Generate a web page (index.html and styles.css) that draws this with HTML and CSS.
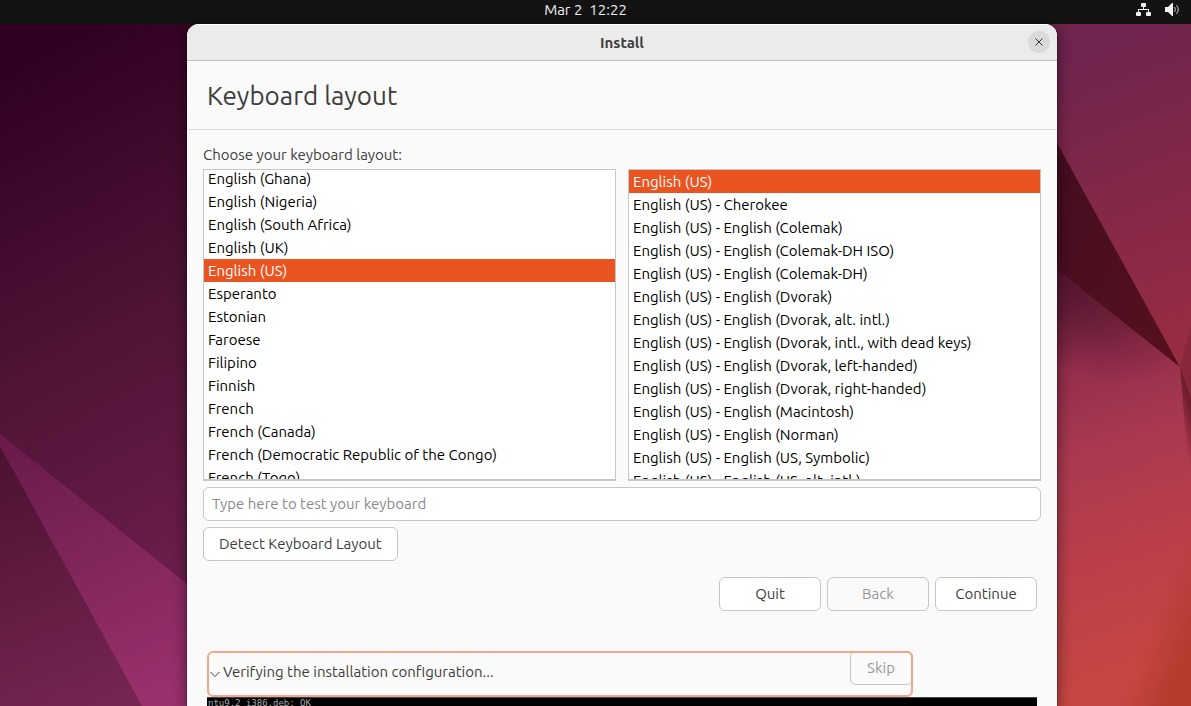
FILE: index.html
```html
<!DOCTYPE html>
<html lang="en">
<head>
<meta charset="utf-8">
<meta name="viewport" content="width=device-width, initial-scale=1">
<title>Install</title>
<link rel="stylesheet" href="styles.css">
</head>
<body>
<svg class="wallpaper" viewBox="0 0 1191 706" preserveAspectRatio="none" aria-hidden="true">
  <defs>
    <linearGradient id="dusk" gradientUnits="userSpaceOnUse" x1="20" y1="60" x2="290" y2="560"><stop offset="0" stop-color="#310021"/><stop offset=".5" stop-color="#4f1436"/><stop offset="1" stop-color="#701f4c"/></linearGradient>
    <linearGradient id="petal" gradientUnits="userSpaceOnUse" x1="30" y1="450" x2="150" y2="706"><stop offset="0" stop-color="#6c1c4c"/><stop offset="1" stop-color="#9a316c"/></linearGradient>
    <linearGradient id="corner" gradientUnits="userSpaceOnUse" x1="0" y1="460" x2="100" y2="706"><stop offset="0" stop-color="#4d1232"/><stop offset="1" stop-color="#752550"/></linearGradient>
    <linearGradient id="plum" gradientUnits="userSpaceOnUse" x1="1080" y1="50" x2="1200" y2="360"><stop offset="0" stop-color="#70244e"/><stop offset=".3" stop-color="#7c264a"/><stop offset="1" stop-color="#9a2d41"/></linearGradient>
    <linearGradient id="fold" x1="0" y1="0" x2="1" y2="1"><stop offset="0" stop-color="#3c0d24"/><stop offset="1" stop-color="#56101c"/></linearGradient>
    <linearGradient id="ember" gradientUnits="userSpaceOnUse" x1="1080" y1="300" x2="1190" y2="660"><stop offset="0" stop-color="#7a2440"/><stop offset=".15" stop-color="#922d4b"/><stop offset=".4" stop-color="#ab3950"/><stop offset=".65" stop-color="#b93e4b"/><stop offset="1" stop-color="#c64742"/></linearGradient>
    <radialGradient id="shade" gradientTransform="translate(1050 264) rotate(38) scale(160 85)" gradientUnits="userSpaceOnUse" cx="0" cy="0" r="1"><stop offset="0" stop-color="#46102a" stop-opacity=".8"/><stop offset="1" stop-color="#46102a" stop-opacity="0"/></radialGradient>
    <linearGradient id="rim" gradientUnits="userSpaceOnUse" x1="1160" y1="600" x2="1200" y2="616"><stop offset="0" stop-color="#b0392a" stop-opacity="0"/><stop offset="1" stop-color="#b0392a" stop-opacity=".8"/></linearGradient>
    <linearGradient id="crease" gradientUnits="userSpaceOnUse" x1="1194" y1="420" x2="1179" y2="424"><stop offset="0" stop-color="#6e1d2a"/><stop offset="1" stop-color="#6e1d2a" stop-opacity="0"/></linearGradient>
  </defs>
  <rect width="1191" height="706" fill="url(#dusk)"/>
  <path d="M0 434 187 584 260 642V706H0z" fill="url(#petal)"/>
  <path d="M0 446 142 706H0z" fill="url(#corner)"/>
  <path d="M900 0H1191V706H900z" fill="url(#plum)"/>
  <path d="M1000 225 1180 367 1191 398V706H1000z" fill="url(#ember)"/>
  <path d="M1000 225 1180 367V500H1000z" fill="url(#shade)"/>
  <path d="M1191 450V706H1100z" fill="url(#rim)"/>
  <path d="M1180 367 1191 396V500z" fill="url(#crease)"/>
  <path d="M1180 367 1191 325V398z" fill="#862839"/>
  <path d="M1000 39 1057 143 1180 367 1057 270 1000 225z" fill="url(#fold)"/>
</svg>
<div class="screen">
  <header class="topbar">
    <time class="clock" datetime="03-02T12:22">Mar 2&nbsp; 12:22</time>
    <div class="tray">
      <svg class="tray-icon" viewBox="0 0 16 16" role="img" aria-label="Wired network"><rect x="5" y="1" width="5" height="4" rx="1"/><rect x="0" y="10" width="5" height="4" rx="1"/><rect x="10" y="10" width="5" height="4" rx="1"/><path d="M7 5h1v2h5v3h-1V8H3v2H2V7h5z"/></svg>
      <svg class="tray-icon" viewBox="0 0 16 16" role="img" aria-label="Volume"><path d="M1 5h3l4-4h1v13H8l-4-4H1z"/><path class="wave" d="M10.500 5q2 2.500 0 5M12.500 3.200q3.500 4.300 0 8.600"/></svg>
    </div>
  </header>
  <main class="window">
    <header class="titlebar">
      <h1 class="window-title">Install</h1>
      <button class="close" type="button" aria-label="Close"><svg viewBox="0 0 10 10" aria-hidden="true"><path d="M1.500 1.500l7 7M8.500 1.500l-7 7"/></svg></button>
    </header>
    <h2 class="page-title">Keyboard layout</h2>
    <form class="content">
      <label class="prompt" for="layout">Choose your keyboard layout:</label>
      <div class="lists">
        <div class="list">
          <select class="options scrolled" id="layout" size="14">
            <option>English (Ghana)</option>
            <option>English (Nigeria)</option>
            <option>English (South Africa)</option>
            <option>English (UK)</option>
            <option selected>English (US)</option>
            <option>Esperanto</option>
            <option>Estonian</option>
            <option>Faroese</option>
            <option>Filipino</option>
            <option>Finnish</option>
            <option>French</option>
            <option>French (Canada)</option>
            <option>French (Democratic Republic of the Congo)</option>
            <option>French (Togo)</option>
          </select>
        </div>
        <div class="list">
          <select class="options" size="14" aria-label="Layout variant">
            <option selected>English (US)</option>
            <option>English (US) - Cherokee</option>
            <option>English (US) - English (Colemak)</option>
            <option>English (US) - English (Colemak-DH ISO)</option>
            <option>English (US) - English (Colemak-DH)</option>
            <option>English (US) - English (Dvorak)</option>
            <option>English (US) - English (Dvorak, alt. intl.)</option>
            <option>English (US) - English (Dvorak, intl., with dead keys)</option>
            <option>English (US) - English (Dvorak, left-handed)</option>
            <option>English (US) - English (Dvorak, right-handed)</option>
            <option>English (US) - English (Macintosh)</option>
            <option>English (US) - English (Norman)</option>
            <option>English (US) - English (US, Symbolic)</option>
            <option>English (US) - English (US, alt. intl.)</option>
          </select>
        </div>
      </div>
      <input class="test" type="text" placeholder="Type here to test your keyboard" aria-label="Type here to test your keyboard">
      <button class="btn detect" type="button">Detect Keyboard Layout</button>
      <div class="actions">
        <button class="btn" type="button">Quit</button>
        <button class="btn" type="button" disabled>Back</button>
        <button class="btn" type="button">Continue</button>
      </div>
    </form>
    <section class="progress">
      <div class="status">
        <button class="expander" type="button" aria-expanded="true"><svg class="chevron" viewBox="0 0 12 12" aria-hidden="true"><path d="M1.500 6 6 10.500 10.500 6"/></svg>Verifying the installation configuration...</button>
        <button class="btn skip" type="button" disabled>Skip</button>
      </div>
      <pre class="console">ntu9.2_i386.deb: OK</pre>
    </section>
  </main>
</div>
</body>
</html>
```
FILE: styles.css
```css
* { box-sizing: border-box; }

body {
  margin: 0;
  height: 100vh;
  overflow: hidden;
  background: #310021;
  color: #3d3d3d;
  font: 15px/22px Ubuntu, "Noto Sans", sans-serif;
}

button, input, select { font: inherit; color: inherit; }

.wallpaper {
  position: absolute;
  inset: 0;
  width: 100%;
  height: 100%;
}

.screen {
  position: relative;
  display: flex;
  flex-direction: column;
  height: 100%;
}

.topbar {
  display: grid;
  grid-template-columns: 1fr auto 1fr;
  flex: none;
  align-items: center;
  height: 24px;
  padding: 0 11px;
  background: #131313;
  color: #f2f2f2;
}

.clock { grid-column: 2; line-height: 20px; margin-bottom: 4px; padding-right: 20px; }

.tray { display: flex; justify-content: flex-end; gap: 12px; margin-bottom: 4px; }
.tray-icon { width: 16px; height: 16px; fill: #f2f2f2; }
.wave { fill: none; stroke: #d0d0d0; stroke-width: 1; }

.window {
  display: flex;
  flex: 1;
  flex-direction: column;
  min-height: 0;
  margin: 0 134px 0 187px;
  overflow: hidden;
  background: #fafafa;
  border-radius: 12px 12px 0 0;
  box-shadow: 0 2px 14px 2px rgba(0, 0, 0, .4), 0 0 0 1px rgba(0, 0, 0, .2);
}

.titlebar {
  display: grid;
  grid-template-columns: 1fr auto 1fr;
  flex: none;
  align-items: center;
  height: 37px;
  padding: 0 7px;
  background: #ebebeb;
  border-bottom: 1px solid #bfbfbf;
  box-shadow: inset 0 1px #fff;
}

.window-title { grid-column: 2; margin: 0; padding-top: 2px; font-size: 15px; font-weight: 700; }

.close {
  display: grid;
  place-items: center;
  justify-self: end;
  width: 22px;
  height: 22px;
  padding: 0;
  background: #dadada;
  border: 0;
  border-radius: 50%;
}

.close svg { width: 10px; height: 10px; fill: none; stroke: #333; stroke-width: 1; }

.page-title {
  flex: none;
  margin: 0;
  padding: 17px 20px 15px;
  border-bottom: 1px solid #e0e0e0;
  font-size: 26px;
  font-weight: 400;
  line-height: 36px;
}

.content {
  display: flex;
  flex: none;
  flex-direction: column;
  padding: 14px 16px 0;
}

.prompt { margin-bottom: 3px; }

.lists { display: grid; grid-template-columns: 1fr 1fr; gap: 12px; }

.list {
  height: 312px;
  overflow: hidden;
  background: #fff;
  border: 1px solid #c6c6c6;
  border-bottom-width: 2px;
}

.options {
  display: block;
  width: 100%;
  height: 322px;
  padding: 0;
  overflow: hidden;
  background: #fff;
  border: 0;
  border-radius: 0;
  outline: 0;
  color: #000;
}

.scrolled { margin-top: -3px; }

.options option { height: 23px; min-height: 23px; padding: 3px 4px 0; }

.options option:checked {
  background: linear-gradient(#e95420, #e95420);
  -webkit-text-fill-color: #fff;
}

.test {
  height: 34px;
  margin-top: 6px;
  padding: 0 8px 2px;
  background: #fff;
  border: 1px solid #c9c9c9;
  border-radius: 6px;
}

.test::placeholder { color: #8a8a8a; opacity: 1; }

.btn {
  height: 34px;
  min-width: 102px;
  padding: 0 15px;
  background: #fff;
  border: 1px solid #c6c6c6;
  border-radius: 6px;
}

.btn:disabled { background: #fafafa; color: #999; }

.detect { align-self: flex-start; margin-top: 6px; }

.actions {
  display: flex;
  justify-content: flex-end;
  gap: 6px;
  margin-top: 16px;
  padding-right: 4px;
}

.progress { margin: 40px 20px 0; }

.status {
  display: flex;
  align-items: flex-start;
  justify-content: space-between;
  width: 85%;
  height: 46px;
  padding-left: 2px;
  border-radius: 6px;
  outline: 2px solid #f2a68d;
  outline-offset: -2px;
}

.expander {
  display: flex;
  align-items: center;
  height: 42px;
  padding: 0;
  background: none;
  border: 0;
}

.chevron { width: 12px; height: 12px; margin-right: 2px; fill: none; stroke: #444; stroke-width: 1; }

.skip { min-width: 63px; }

.console {
  height: 40px;
  margin: 0;
  padding: 0 1px;
  background: #000;
  border-top: 1px solid #444;
  color: #aaa;
  font: 9px/11px "DejaVu Sans Mono", monospace;
}
```
